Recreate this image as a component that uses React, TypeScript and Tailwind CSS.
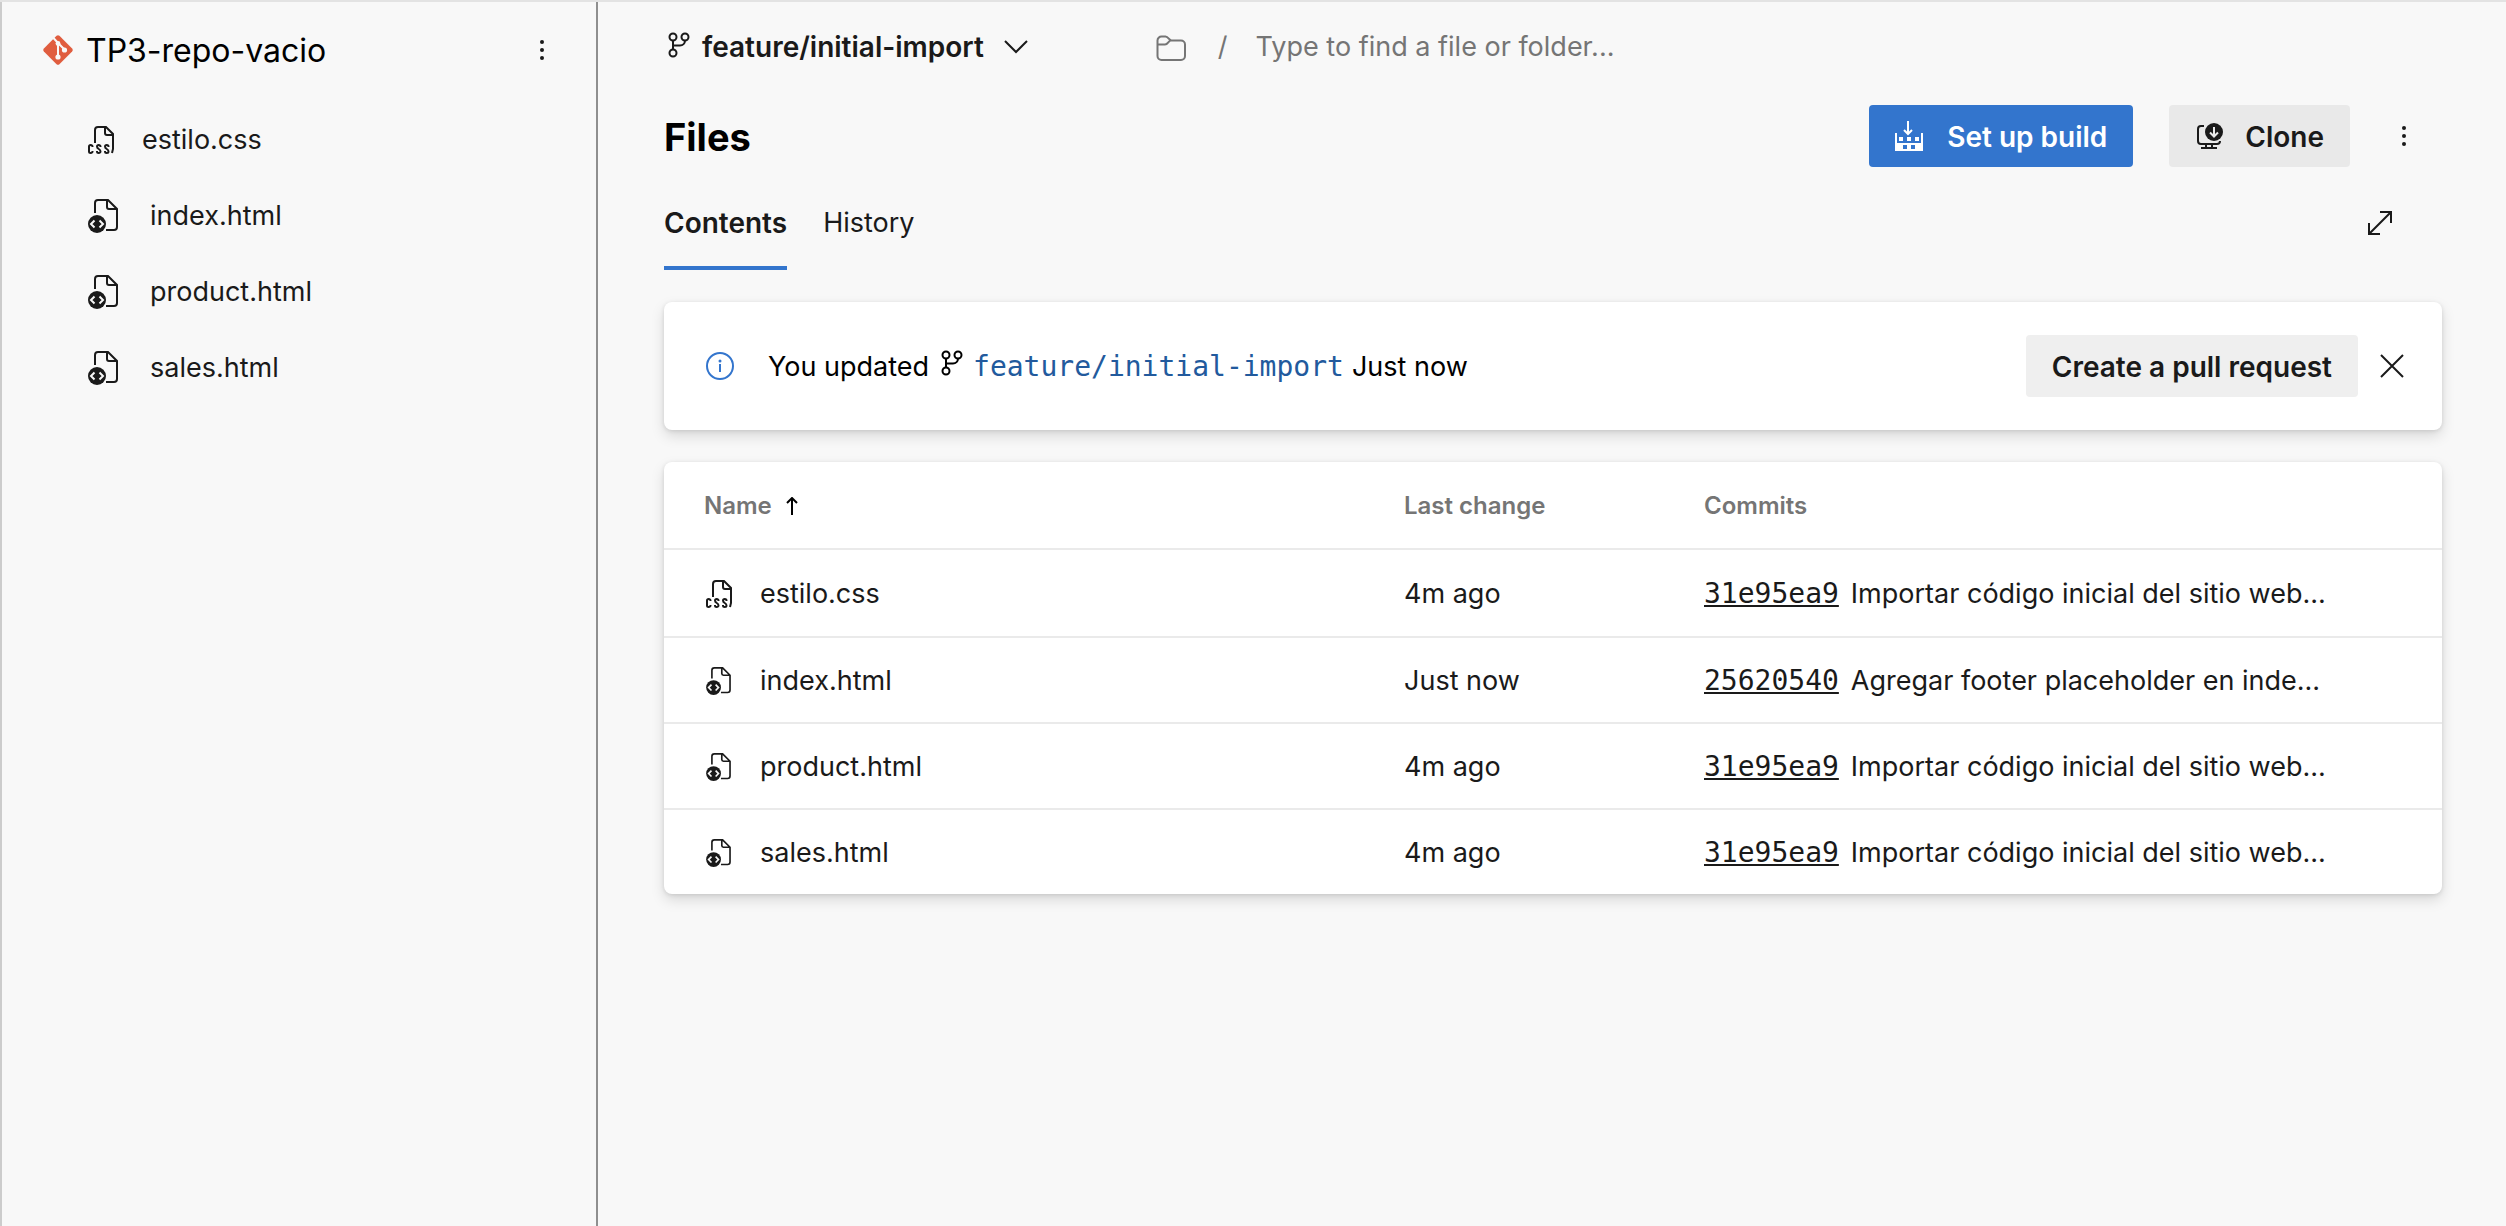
import React from "react";

type IconProps = { className?: string };

function GitLogo({ className }: IconProps) {
  return (
    <svg viewBox="0 0 32 32" className={className} aria-hidden="true">
      <rect x="5" y="5" width="22" height="22" rx="2" fill="#e05d3f" transform="rotate(45 16 16)" />
      <path d="M11 3.500 16 9v14M16.500 9.500l6 6" stroke="#f8f8f8" strokeWidth="2" fill="none" />
      <circle cx="16" cy="9.500" r="2.400" fill="#f8f8f8" />
      <circle cx="16" cy="23" r="2.600" fill="#f8f8f8" />
      <circle cx="22.500" cy="16" r="2.600" fill="#f8f8f8" />
    </svg>
  );
}

function MoreIcon({ className }: IconProps) {
  return (
    <svg viewBox="0 0 32 32" className={className} fill="#1a1a1a" aria-hidden="true">
      <circle cx="16" cy="8" r="2" />
      <circle cx="16" cy="16" r="2" />
      <circle cx="16" cy="24" r="2" />
    </svg>
  );
}

function CssFileIcon({ className }: IconProps) {
  return (
    <svg viewBox="0 0 28 28" className={className} fill="none" stroke="#1a1a1a" strokeWidth="2" aria-hidden="true">
      <path d="M7 17V4a3 3 0 0 1 3-3h8l7 7v15l-1 4M17 1v6a2 2 0 0 0 2 2h6" />
      <path d="M4.500 21v-.5a1.750 1.500 0 0 0-3.500 0v5a1.750 1.500 0 0 0 3.500 0v-.5" />
      <path d="M12.500 21v-.5a1.750 1.500 0 0 0-3.500 0c0 3 3.500 2 3.500 5a1.750 1.500 0 0 1-3.500 0v-.5" />
      <path d="M20.500 21v-.5a1.750 1.500 0 0 0-3.500 0c0 3 3.500 2 3.500 5a1.750 1.500 0 0 1-3.500 0v-.5" />
    </svg>
  );
}

function HtmlFileIcon({ className }: IconProps) {
  return (
    <svg viewBox="0 0 30 34" className={className} fill="none" aria-hidden="true">
      <path d="M7 14V4a3 3 0 0 1 3-3h10l9 9v18a3 3 0 0 1-3 3h-8M19 1v7a2 2 0 0 0 2 2h8" stroke="#1a1a1a" strokeWidth="2" />
      <circle cx="9" cy="25" r="9" fill="#1a1a1a" />
      <path d="M6.500 21.500 3 25l3.500 3.500M11.500 21.500 15 25l-3.500 3.500" stroke="#f8f8f8" strokeWidth="2" />
    </svg>
  );
}

function BranchIcon({ className }: IconProps) {
  return (
    <svg viewBox="0 0 24 26" className={className} fill="none" stroke="currentColor" strokeWidth="2" aria-hidden="true">
      <circle cx="5" cy="5" r="3.500" />
      <circle cx="17" cy="5" r="3.500" />
      <circle cx="5" cy="21" r="3.500" />
      <path d="M5 8.500v9M17 8.500a5 5 0 0 1-5 5H5" />
    </svg>
  );
}

function ChevronIcon({ className }: IconProps) {
  return (
    <svg viewBox="0 0 24 14" className={className} fill="none" stroke="#1a1a1a" strokeWidth="2" aria-hidden="true">
      <path d="m1 1 11 11L23 1" />
    </svg>
  );
}

function FolderIcon({ className }: IconProps) {
  return (
    <svg viewBox="0 0 30 26" className={className} fill="none" stroke="#757575" strokeWidth="2" aria-hidden="true">
      <path d="M1.500 5.500a4 4 0 0 1 4-4h4c3 0 3.500 4 6 4H25a4 4 0 0 1 4 4V21a4 4 0 0 1-4 4H5.500a4 4 0 0 1-4-4zM1.500 9.500H9c3 0 3.500-4 6-4" />
    </svg>
  );
}

function BuildIcon({ className }: IconProps) {
  return (
    <svg viewBox="0 0 28 30" className={className} aria-hidden="true">
      <path d="M13 0v13M9 9l4 4 4-4" stroke="#fff" strokeWidth="2" fill="none" />
      <path
        fill="#fff"
        fillRule="evenodd"
        d="M0 12h2v10h24V12h2v18H0zM8 24v4h4v-4zM16 24v4h4v-4zM4 16h4v4H4zM12 16h4v4h-4zM20 16h4v4h-4z"
      />
    </svg>
  );
}

function CloneIcon({ className }: IconProps) {
  return (
    <svg viewBox="0 0 26 26" className={className} fill="none" stroke="#1a1a1a" strokeWidth="2" aria-hidden="true">
      <path d="M7 3H4a3 3 0 0 0-3 3v12a3 3 0 0 0 3 3h16a3 3 0 0 0 3-3M9 21v4M15 21v4M4 25h16" />
      <circle cx="17" cy="9" r="9" fill="#1a1a1a" stroke="none" />
      <path d="M17 4v9M13 9.500l4 4 4-4" stroke="#e9e9e9" />
    </svg>
  );
}

function ExpandIcon({ className }: IconProps) {
  return (
    <svg viewBox="0 0 24 24" className={className} fill="none" stroke="#1a1a1a" strokeWidth="2" aria-hidden="true">
      <path d="M12 1h11v11M1 12v11h11M1 23 23 1" />
    </svg>
  );
}

function InfoIcon({ className }: IconProps) {
  return (
    <svg viewBox="0 0 28 28" className={className} aria-hidden="true">
      <circle cx="14" cy="14" r="13" fill="none" stroke="#3375cd" strokeWidth="2" />
      <path d="M13 12h2v8h-2z" fill="#3375cd" />
      <circle cx="14" cy="9" r="1.500" fill="#3375cd" />
    </svg>
  );
}

function CloseIcon({ className }: IconProps) {
  return (
    <svg viewBox="0 0 24 24" className={className} fill="none" stroke="#1a1a1a" strokeWidth="2" aria-hidden="true">
      <path d="m1 1 22 22M23 1 1 23" />
    </svg>
  );
}

function SortUpIcon({ className }: IconProps) {
  return (
    <svg viewBox="0 0 12 18" className={className} fill="none" stroke="#000" strokeWidth="2" aria-hidden="true">
      <path d="M6 1v17M1 6l5-5 5 5" />
    </svg>
  );
}

type FileEntry = { name: string; kind: "css" | "html"; changed: string; commit: string; message: string };

const files: FileEntry[] = [
  { name: "estilo.css", kind: "css", changed: "4m ago", commit: "31e95ea9", message: "Importar código inicial del sitio web..." },
  { name: "index.html", kind: "html", changed: "Just now", commit: "25620540", message: "Agregar footer placeholder en inde..." },
  { name: "product.html", kind: "html", changed: "4m ago", commit: "31e95ea9", message: "Importar código inicial del sitio web..." },
  { name: "sales.html", kind: "html", changed: "4m ago", commit: "31e95ea9", message: "Importar código inicial del sitio web..." },
];

const cardShadow = "rounded-lg bg-white shadow-[0_6px_14px_rgba(0,0,0,0.13),0_1px_4px_rgba(0,0,0,0.11)]";

function Sidebar() {
  return (
    <aside className="w-[598px] shrink-0 border-r-2 border-l-2 border-r-[#8f8f8f] border-l-[#cccccc]">
      <header className="flex h-24 items-center pr-[38px] pl-10">
        <GitLogo className="size-8" />
        <h2 className="ml-3 grow pt-0.5 text-[32px] leading-10 text-black">TP3-repo-vacio</h2>
        <button type="button" aria-label="More actions">
          <MoreIcon className="size-8" />
        </button>
      </header>
      <ul className="mt-1">
        {files.map((f) => (
          <li key={f.name}>
            <a href={"#" + f.name} className="flex h-[76px] items-center pl-[86px]">
              {f.kind === "css" ? <CssFileIcon className="size-7" /> : <HtmlFileIcon className="h-[34px] w-[30px]" />}
              <span className={f.kind === "css" ? "ml-[26px]" : "ml-8"}>{f.name}</span>
            </a>
          </li>
        ))}
      </ul>
    </aside>
  );
}

function PathBar() {
  return (
    <div className="flex h-[90px] items-center">
      <button type="button" className="flex items-center pl-1 text-[28px] font-semibold">
        <BranchIcon className="mb-1 h-[26px] w-6" />
        <span className="ml-[10px]">feature/initial-import</span>
        <ChevronIcon className="ml-5 h-[14px] w-6" />
      </button>
      <label className="ml-32 flex grow items-center text-[#757575]">
        <FolderIcon className="mt-0.5 h-[26px] w-[30px]" />
        <span className="ml-8">/</span>
        <input
          type="text"
          aria-label="Find a file or folder"
          placeholder="Type to find a file or folder..."
          className="ml-7 grow bg-transparent outline-none placeholder:text-[#757575]"
        />
      </label>
    </div>
  );
}

function Banner() {
  return (
    <section className={"mt-8 flex h-32 items-center pr-[38px] pl-[42px] text-black " + cardShadow}>
      <InfoIcon className="size-7" />
      <p className="ml-[34px] flex grow items-center pt-0.5">
        You updated
        <BranchIcon className="mb-2 ml-3 h-[26px] w-6" />
        <a href="#branch" className="mr-2 ml-2 font-['DejaVu_Sans_Mono',monospace] text-[28px] text-[#225a9d]">
          feature/initial-import
        </a>
        Just now
      </p>
      <button type="button" className="h-[62px] rounded-sm bg-[#efefef] px-[26px] pt-0.5 text-[28px] font-semibold text-[#1a1a1a]">
        Create a pull request
      </button>
      <button type="button" aria-label="Dismiss" className="ml-[22px]">
        <CloseIcon className="size-6" />
      </button>
    </section>
  );
}

function FileTable() {
  return (
    <section className={"mt-8 overflow-hidden " + cardShadow}>
      <table className="w-full table-fixed border-separate border-spacing-0 text-left [&_td]:border-[#eaeaea] [&_td]:pt-0.5 [&_th]:border-b-2 [&_th]:border-[#eaeaea] [&_th]:pt-0.5">
        <colgroup>
          <col className="w-[740px]" />
          <col className="w-[300px]" />
          <col />
        </colgroup>
        <thead className="text-2xl text-[#757575]">
          <tr className="h-[88px]">
            <th scope="col" className="pl-10 font-semibold">
              <button type="button" className="flex items-center">
                Name
                <SortUpIcon className="ml-[14px] h-[18px] w-3" />
              </button>
            </th>
            <th scope="col" className="font-semibold">Last change</th>
            <th scope="col" className="font-semibold">Commits</th>
          </tr>
        </thead>
        <tbody>
          {files.map((f) => (
            <tr key={f.name} className="h-[86px] first:h-[88px] last:h-[84px] [&:not(:last-child)>td]:border-b-2">
              <td>
                <a href={"#" + f.name} className="flex items-center pl-[42px]">
                  <span className="w-7">
                    {f.kind === "css" ? <CssFileIcon className="size-7" /> : <HtmlFileIcon className="h-7 w-[25px]" />}
                  </span>
                  <span className="ml-[26px]">{f.name}</span>
                </a>
              </td>
              <td>{f.changed}</td>
              <td className="truncate">
                <a
                  href={"#" + f.commit}
                  className="mr-3 font-['DejaVu_Sans_Mono',monospace] text-[28px] underline decoration-2 underline-offset-2"
                >
                  {f.commit}
                </a>
                <span>{f.message}</span>
              </td>
            </tr>
          ))}
        </tbody>
      </table>
    </section>
  );
}

export default function App() {
  return (
    <div className="flex min-h-screen border-t-2 border-[#e3e3e3] bg-[#f8f8f8] font-['Inter',sans-serif] text-[27px] leading-10 text-[#1a1a1a]">
      <Sidebar />
      <main className="min-w-0 grow pr-16 pl-[66px]">
        <PathBar />
        <div className="flex items-center pt-[13px]">
          <h1 className="grow pt-0.5 text-[38px] leading-[60px] font-bold text-black">Files</h1>
          <button type="button" className="flex h-[62px] items-center rounded-sm bg-[#3375cd] px-[26px] text-[28px] font-semibold text-white">
            <BuildIcon className="h-[30px] w-7" />
            <span className="ml-6 pt-0.5">Set up build</span>
          </button>
          <button type="button" className="ml-9 flex h-[62px] items-center rounded-sm bg-[#e9e9e9] pr-[26px] pl-7 text-[28px] font-semibold">
            <CloneIcon className="size-[26px]" />
            <span className="ml-[22px] pt-0.5">Clone</span>
          </button>
          <button type="button" aria-label="More actions" className="mr-[22px] ml-[38px]">
            <MoreIcon className="size-8" />
          </button>
        </div>
        <nav className="mt-2 flex items-center">
          <button type="button" className="h-[95px] border-b-4 border-[#3375cd] pt-1 text-[28px] font-semibold">Contents</button>
          <button type="button" className="ml-9 h-[95px] grow border-b-4 border-transparent pt-1 text-left">History</button>
          <button type="button" aria-label="Full screen" className="mr-[50px]">
            <ExpandIcon className="size-6" />
          </button>
        </nav>
        <Banner />
        <FileTable />
      </main>
    </div>
  );
}
